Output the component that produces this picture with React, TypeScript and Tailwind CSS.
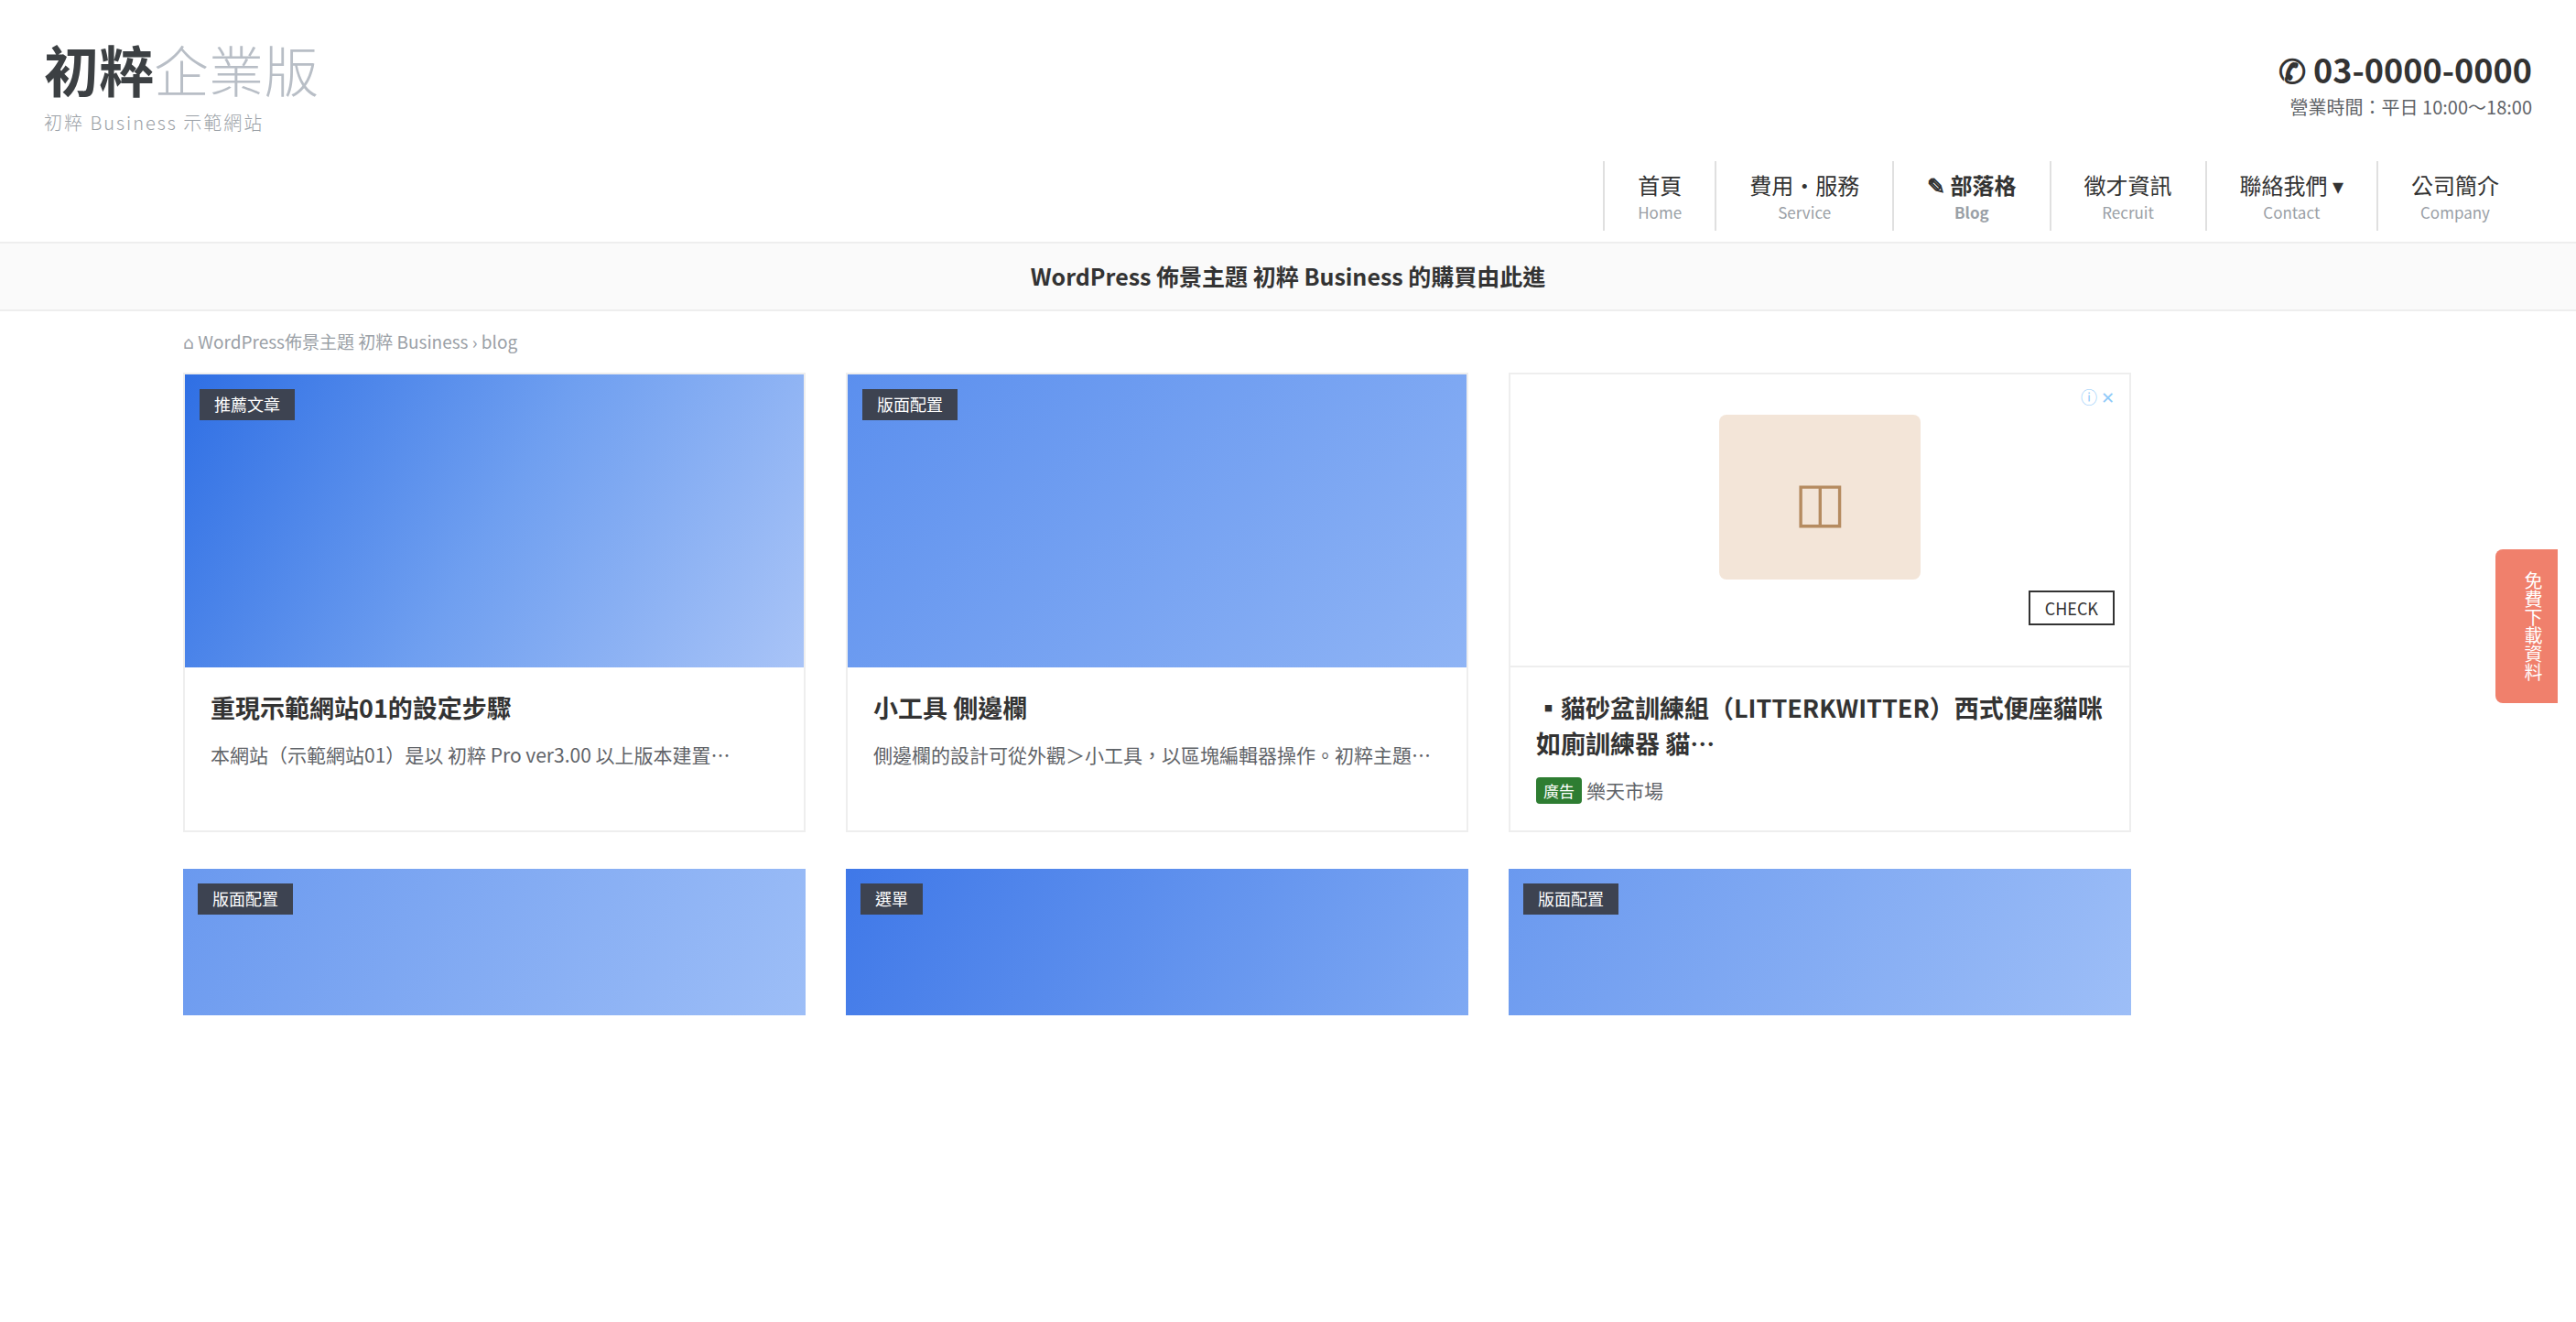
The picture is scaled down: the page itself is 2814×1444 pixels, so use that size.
import clsx from "clsx";

const navItems = [
  { label: "首頁", sub: "Home" },
  { label: "費用・服務", sub: "Service" },
  { label: "✎ 部落格", sub: "Blog", active: true },
  { label: "徵才資訊", sub: "Recruit" },
  { label: "聯絡我們 ▾", sub: "Contact" },
  { label: "公司簡介", sub: "Company" },
];

const posts = [
  {
    tag: "推薦文章",
    title: "重現示範網站01的設定步驟",
    text: "本網站（示範網站01）是以 初粹 Pro ver3.00 以上版本建置…",
    cover: "bg-[linear-gradient(120deg,#2f6fe4,#6f9ff0_50%,#a9c4f7)]",
  },
  {
    tag: "版面配置",
    title: "小工具 側邊欄",
    text: "側邊欄的設計可從外觀＞小工具，以區塊編輯器操作。初粹主題…",
    cover: "bg-[linear-gradient(135deg,#5b8fee,#8fb4f5)]",
  },
];

const morePosts = [
  { tag: "版面配置", cover: "bg-[linear-gradient(120deg,#6a99ef,#9dbef7)]" },
  { tag: "選單", cover: "bg-[linear-gradient(120deg,#3f78e8,#7fa9f3)]" },
  { tag: "版面配置", cover: "bg-[linear-gradient(120deg,#6a99ef,#9dbef7)]" },
];

function Tag({ children }: { children: string }) {
  return (
    <span className="block h-[34px] bg-[#3d4351] px-4 text-[18px] leading-[33px] text-white">
      {children}
    </span>
  );
}

function Header() {
  return (
    <header className="flex h-[266px] flex-col border-b-2 border-[#eee] px-12 pt-9">
      <div className="flex h-[140px] items-start justify-between">
        <div>
          <h1 className="flex h-[78px] items-center text-[60px] leading-none font-bold text-[#3c4043]">
            初粹<span className="font-light text-[#b8bec6]">企業版</span>
          </h1>
          <p className="mt-[5px] text-[20px] leading-[30px] font-light tracking-[2px] text-[#9aa0a6]">
            初粹 Business 示範網站
          </p>
        </div>
        <div className="pt-[18px] text-right">
          <p className="text-[36px] leading-[43px] font-bold">✆ 03-0000-0000</p>
          <p className="mt-[2px] text-[20px] leading-[36px] text-[#5f6368]">營業時間：平日 10:00～18:00</p>
        </div>
      </div>
      <nav className="flex justify-end">
        {navItems.map((item) => (
          <a
            key={item.sub}
            className={clsx(
              "flex h-[76px] flex-col items-center border-l-2 border-[#e0e0e0] px-9 pt-2",
              item.active && "font-bold"
            )}
          >
            <span className="text-[24px] leading-[36px]">{item.label}</span>
            <span className="text-[17px] leading-[24px] text-[#9aa0a6]">{item.sub}</span>
          </a>
        ))}
      </nav>
    </header>
  );
}

function AdCard() {
  return (
    <article className="h-[502px] border-2 border-[#eee]">
      <div className="relative flex h-[320px] justify-center border-b-2 border-[#eee] pt-11">
        <div className="flex h-[180px] w-[220px] items-center justify-center rounded-lg bg-[#f3e5d8] text-[60px] text-[#b58b60]">
          ◫
        </div>
        <span className="absolute top-[10px] right-4 text-[18px] leading-[28px] text-[#90caf9]">
          ⓘ ✕
        </span>
        <span className="absolute right-4 bottom-11 flex h-[38px] items-center border-2 border-[#333] px-4 text-[18px]">
          CHECK
        </span>
      </div>
      <div className="px-7 pt-6">
        <h2 className="text-[27px] leading-[39px] font-bold">
          ▪貓砂盆訓練組（LITTERKWITTER）西式便座貓咪如廁訓練器 貓…
        </h2>
        <p className="mt-[14px] flex items-center text-[21px] leading-[36px] text-[#5f6368]">
          <span className="mt-px mr-[5px] h-[29px] rounded bg-[#2e7d32] px-2 text-[17px] leading-[29px] text-white">
            廣告
          </span>
          樂天市場
        </p>
      </div>
    </article>
  );
}

export default function App() {
  return (
    <div
      lang="zh-Hant"
      className="relative min-h-[1444px] bg-white font-['Noto_Sans_CJK_TC',sans-serif] text-[#333]"
    >
      <Header />
      <div className="h-[74px] border-b-2 border-[#eee] bg-[#fafafa] text-center text-[25px] leading-[71px] font-bold">
        WordPress 佈景主題 初粹 Business 的購買由此進
      </div>

      <main className="ml-[200px] w-[2128px]">
        <p className="h-[67px] pt-[19px] font-['Noto_Sans_CJK_TC','DejaVu_Sans',sans-serif] text-[19px] leading-[28px] text-[#9aa0a6]">
          ⌂ WordPress佈景主題 初粹 Business › blog
        </p>
        <div className="grid grid-cols-3 gap-x-11 gap-y-10">
          {posts.map((post) => (
            <article key={post.title} className="h-[502px] border-2 border-[#eee]">
              <div className={clsx("flex h-[320px] items-start p-4", post.cover)}>
                <Tag>{post.tag}</Tag>
              </div>
              <div className="px-7 pt-6">
                <h2 className="text-[27px] leading-[39px] font-bold">{post.title}</h2>
                <p className="mt-[14px] text-[21px] leading-[36px] text-[#5f6368]">{post.text}</p>
              </div>
            </article>
          ))}
          <AdCard />
          {morePosts.map((post, i) => (
            <div key={i} className={clsx("flex h-[160px] items-start p-4", post.cover)}>
              <Tag>{post.tag}</Tag>
            </div>
          ))}
        </div>
      </main>

      <a className="fixed top-[600px] right-5 h-[168px] w-[68px] rounded-l-lg bg-[#f0806c] pt-6 pr-[15px] text-[20px] leading-[24px] text-white [writing-mode:vertical-rl]">
        免費下載資料
      </a>
    </div>
  );
}
